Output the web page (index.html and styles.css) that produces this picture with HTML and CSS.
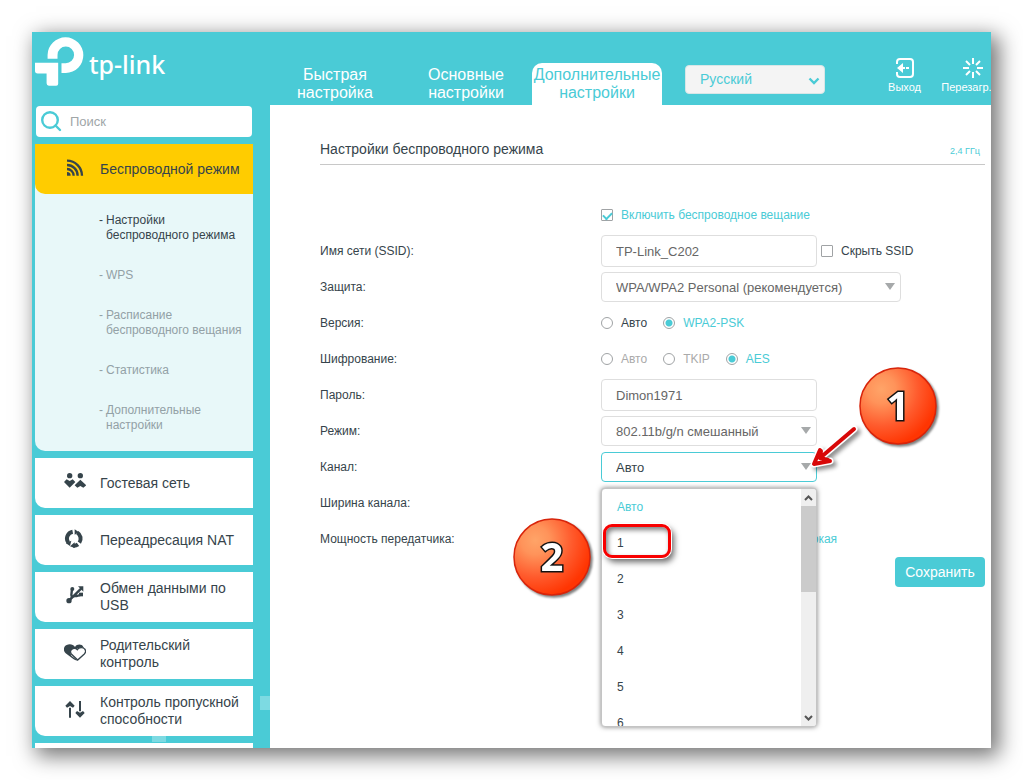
FILE: index.html
```
<!DOCTYPE html>
<html lang="ru">
<head>
<meta charset="utf-8">
<title>Настройки беспроводного режима</title>
<meta name="viewport" content="width=device-width, initial-scale=1">
<link rel="stylesheet" href="styles.css">
</head>
<body>
<div class="app">
  <aside class="sidebar">
    <a class="logo" href="#">
      <svg class="logo-mark" viewBox="45 51 148 148" aria-hidden="true">
        <path d="M83 117V105A54 54 0 1 1 138 160H125V130H138A25 25 0 1 0 113 105V117Z"/>
        <path d="M45 129H115V192Q115 198 109 198H87Q80 198 80 191V161H53Q45 161 45 153Z"/>
      </svg>
      <span class="logo-text">tp-link</span>
    </a>
    <label class="search">
      <svg class="search-icon" viewBox="0 0 21 21" aria-hidden="true"><circle cx="9" cy="9" r="7.800"/><path d="M14.5 14.5L19 19"/></svg>
      <input class="search-input" type="text" placeholder="Поиск" aria-label="Поиск">
    </label>
    <nav class="menu">
      <div class="menu-group">
        <a class="menu-item menu-item-active" href="#">
          <svg class="menu-icon" viewBox="132 410 66 66" aria-hidden="true"><g fill="none" stroke="#36444b" stroke-width="7"><path d="M141 421A45 45 0 0 1 186 466"/><path d="M141 434A32 32 0 0 1 173 466"/><path d="M141 446A20 20 0 0 1 161 466"/></g><path d="M141 455A11 11 0 0 1 152 466H141Z"/></svg>
          <span>Беспроводной режим</span>
        </a>
        <ul class="submenu">
          <li><a class="sub-link sub-link-active" href="#">Настройки беспроводного режима</a></li>
          <li><a class="sub-link" href="#">WPS</a></li>
          <li><a class="sub-link" href="#">Расписание беспроводного вещания</a></li>
          <li><a class="sub-link" href="#">Статистика</a></li>
          <li><a class="sub-link" href="#">Дополнительные настройки</a></li>
        </ul>
      </div>
      <a class="menu-item" href="#">
        <svg class="menu-icon" viewBox="132 62 66 66" aria-hidden="true"><circle cx="149" cy="76" r="8"/><circle cx="181" cy="76" r="8"/><path d="M132 95L140 87L149 92L158 87L166 95L149 112ZM181 88L199 105L190 112L181 107L172 112L164 105Z"/></svg>
        <span>Гостевая сеть</span>
      </a>
      <a class="menu-item" href="#">
        <svg class="menu-icon" viewBox="132 232 66 66" aria-hidden="true"><g fill="none" stroke="#36444b" stroke-width="12"><path d="M158 243A21 21 0 0 0 145 276"/><path d="M172 246A21 21 0 0 1 178 276"/><path d="M174 281A21 21 0 0 1 160 285"/></g><path d="M164 236V252L177 245ZM138 278L154 270L150 286ZM164 275V292L150 287Z"/></svg>
        <span>Переадресация NAT</span>
      </a>
      <a class="menu-item" href="#">
        <svg class="menu-icon" viewBox="132 404 66 66" aria-hidden="true"><circle cx="147" cy="451" r="8"/><path d="M174 408H190V424Z"/><circle cx="157" cy="416" r="6"/><path d="M177 427H189V438H177Z"/><g fill="none" stroke="#36444b" stroke-width="7"><path d="M147 451L184 414M156 416L154 434L156 442M184 433L170 437L162 436M152 443L166 436"/></g></svg>
        <span>Обмен данными по USB</span>
      </a>
      <a class="menu-item" href="#">
        <svg class="menu-icon" viewBox="132 64 66 66" aria-hidden="true"><path d="M165 79C171 69 186 70 190 79L194 86L176 82L150 93L154 105L172 119C169 120 165 119 161 116L137 98C129 91 130 77 140 73C149 69 160 71 165 79Z"/><path d="M172 87C176 79 190 79 194 85C199 91 196 97 193 100L173 118L154 100C149 94 152 86 159 84C166 82 170 85 172 87Z" fill="#fff" stroke="#36444b" stroke-width="4"/></svg>
        <span>Родительский контроль</span>
      </a>
      <a class="menu-item" href="#">
        <svg class="menu-icon" viewBox="132 236 66 66" aria-hidden="true"><path d="M147 262H153V292H147ZM150 242L164 256L159 262L150 257L141 262L136 256ZM177 242H183V273H177ZM180 292L166 278L171 272L180 277L189 272L194 278Z"/></svg>
        <span>Контроль пропускной способности</span>
      </a>
      <a class="menu-item" href="#" aria-label="Безопасность"></a>
    </nav>
  </aside>

  <div class="main">
    <header class="topbar">
      <nav class="tabs">
        <a class="tab" href="#">Быстрая настройка</a>
        <a class="tab" href="#">Основные настройки</a>
        <a class="tab tab-active" href="#">Дополнительные настройки</a>
      </nav>
      <div class="language">
        <select class="language-select" aria-label="Язык"><option>Русский</option></select>
        <svg class="language-arrow" viewBox="0 0 12 8" aria-hidden="true"><path d="M1.5 1.5L6 6L10.5 1.5"/></svg>
      </div>
      <div class="actions">
        <button class="action" type="button">
          <svg class="action-icon" viewBox="0 0 20 20" aria-hidden="true"><path d="M2 6V4Q2 1 5 1H15Q18 1 18 4V16Q18 19 15 19H5Q2 19 2 16V14" fill="none" stroke="#fff" stroke-width="2"/><path d="M2 10L8 5V15ZM7 9H10V11H7ZM11 9H14V11H11Z" fill="#fff"/></svg>
          <span>Выход</span>
        </button>
        <button class="action" type="button">
          <svg class="action-icon" viewBox="0 0 20 20" aria-hidden="true"><path d="M10 0V6M10 14V20M0 10H6M14 10H20M3 3L7 7M13 13L17 17M17 3L13 7M7 13L3 17" fill="none" stroke="#fff" stroke-width="2"/></svg>
          <span>Перезагр.</span>
        </button>
      </div>
    </header>

    <main class="content">
      <div class="heading">
        <h1 class="title">Настройки беспроводного режима</h1>
        <a class="band" href="#">2,4 ГГц</a>
      </div>
      <form class="form">
        <div class="row">
          <span></span>
          <label class="choice choice-on"><input class="check" type="checkbox" checked>Включить беспроводное вещание</label>
        </div>
        <div class="row">
          <label for="ssid">Имя сети (SSID):</label>
          <div class="field-line">
            <input class="text-box" id="ssid" type="text" value="TP-Link_C202">
            <label class="choice"><input class="check" type="checkbox">Скрыть SSID</label>
          </div>
        </div>
        <div class="row">
          <label for="security">Защита:</label>
          <div class="select-box select-wide"><select class="select" id="security"><option>WPA/WPA2 Personal (рекомендуется)</option></select></div>
        </div>
        <div class="row">
          <span>Версия:</span>
          <div class="radios">
            <label class="choice"><input class="radio" type="radio" name="version">Авто</label>
            <label class="choice choice-on"><input class="radio" type="radio" name="version" checked>WPA2-PSK</label>
          </div>
        </div>
        <div class="row">
          <span>Шифрование:</span>
          <div class="radios">
            <label class="choice choice-off"><input class="radio" type="radio" name="cipher" disabled>Авто</label>
            <label class="choice choice-off"><input class="radio" type="radio" name="cipher" disabled>TKIP</label>
            <label class="choice choice-on"><input class="radio" type="radio" name="cipher" checked>AES</label>
          </div>
        </div>
        <div class="row">
          <label for="password">Пароль:</label>
          <input class="text-box" id="password" type="text" value="Dimon1971">
        </div>
        <div class="row">
          <label for="mode">Режим:</label>
          <div class="select-box"><select class="select" id="mode"><option>802.11b/g/n смешанный</option></select></div>
        </div>
        <div class="row">
          <label for="channel">Канал:</label>
          <div class="select-box select-open">
            <select class="select" id="channel"><option>Авто</option></select>
            <div class="dropdown">
              <ul class="options" role="listbox" aria-label="Канал">
                <li class="option option-selected" role="option" aria-selected="true">Авто</li>
                <li class="option" role="option">1</li>
                <li class="option" role="option">2</li>
                <li class="option" role="option">3</li>
                <li class="option" role="option">4</li>
                <li class="option" role="option">5</li>
                <li class="option" role="option">6</li>
              </ul>
              <div class="scrollbar" aria-hidden="true">
                <svg class="scroll-arrow" viewBox="0 0 15 17"><path d="M4 11L7.5 7.5L11 11"/></svg>
                <div class="scroll-thumb"></div>
                <svg class="scroll-arrow" viewBox="0 0 15 17"><path d="M4 7L7.5 10.5L11 7"/></svg>
              </div>
            </div>
            <div class="highlight"></div>
            <svg class="pointer" viewBox="0 0 60 54" aria-hidden="true">
              <path class="pointer-edge" d="M48 9L14 38M14 30L8 44L24 41"/>
              <path class="pointer-line" d="M48 9L14 38M14 30L8 44L24 41M15 31L14 38L22 40"/>
            </svg>
            <svg class="badge badge-one" viewBox="0 0 84 84" role="img" aria-label="1">
              <defs><radialGradient id="ball" cx="0.28" cy="0.28" r="0.75"><stop offset="0" stop-color="#ffa468"/><stop offset="0.25" stop-color="#ff935a"/><stop offset="0.65" stop-color="#ff5a2c"/><stop offset="1" stop-color="#ff3502"/></radialGradient></defs>
              <circle class="badge-ball" cx="41" cy="41" r="38"/><text class="badge-text" x="41" y="55">1</text>
            </svg>
            <svg class="badge badge-two" viewBox="0 0 84 84" role="img" aria-label="2">
              <circle class="badge-ball" cx="41" cy="41" r="38"/><text class="badge-text" x="41" y="55">2</text>
            </svg>
          </div>
        </div>
        <div class="row">
          <label for="width">Ширина канала:</label>
          <div class="select-box"><select class="select" id="width"><option>Авто</option></select></div>
        </div>
        <div class="row">
          <span>Мощность передатчика:</span>
          <div class="radios radios-power">
            <label class="choice"><input class="radio" type="radio" name="power">Низкая</label>
            <label class="choice"><input class="radio" type="radio" name="power">Средняя</label>
            <label class="choice choice-on"><input class="radio" type="radio" name="power" checked>Высокая</label>
          </div>
        </div>
        <button class="save" type="button">Сохранить</button>
      </form>
    </main>
  </div>
</div>
</body>
</html>
```
FILE: styles.css
```
:root {
  --teal: #4acbd6;
  --dark: #36444b;
}
* { box-sizing: border-box; }
body {
  margin: 0;
  padding: 32px;
  height: 100vh;
  background: #fff;
  color: var(--dark);
  font: 12px/15px "Liberation Sans", Arial, sans-serif;
}
a { color: inherit; text-decoration: none; }
ul { list-style: none; margin: 0; padding: 0; }
input, select, button { font: inherit; color: inherit; margin: 0; }

.app {
  display: grid;
  grid-template-columns: 238px 1fr;
  height: 100%;
  overflow: hidden;
  background: #fff;
  box-shadow: 6px 6px 20px 2px rgba(0, 0, 0, 0.55);
}

/* Sidebar */
.sidebar {
  display: flex;
  flex-direction: column;
  min-height: 0;
  overflow: hidden;
  padding: 0 17px 0 3px;
  background-color: var(--teal);
  background-image:
    linear-gradient(#7ddae2, #7ddae2),
    linear-gradient(#7ddae2, #7ddae2);
  background-repeat: no-repeat;
  background-size: 10px 14px, 14px 6px;
  background-position: right 0 bottom 38px, left 120px bottom 6px;
}
.logo {
  display: flex;
  flex: none;
  align-items: flex-start;
  gap: 5px;
  height: 74px;
  padding-top: 5px;
  color: #fff;
}
.logo-mark { width: 49px; height: 49px; fill: #fff; }
.logo-text { font: 500 25px/32px "Noto Sans", sans-serif; padding-top: 11px; }
.search {
  display: flex;
  flex: none;
  align-items: center;
  gap: 8px;
  height: 31px;
  margin: 0 1px 7px;
  padding: 0 5px;
  border-radius: 4px;
  background: #fff;
}
.search-icon { flex: none; width: 21px; height: 21px; fill: none; stroke: var(--teal); stroke-width: 2.400; stroke-linecap: round; }
.search-input { flex: 1; min-width: 0; padding: 0; border: 0; outline: 0; background: none; font-size: 13px; }
.search-input::placeholder { color: #a0a6a8; opacity: 1; }
.menu { display: flex; flex-direction: column; gap: 7px; }
.menu-group { background: #e8f8f9; border-bottom-left-radius: 10px; }
.menu-item {
  display: flex;
  flex: none;
  align-items: center;
  gap: 14px;
  height: 50px;
  padding: 0 4px 0 29px;
  border-bottom-left-radius: 10px;
  background: #fff;
  font-size: 14px;
  line-height: 17px;
}
.menu-item-active { background: #fc0; }
.menu-icon { flex: none; width: 22px; height: 22px; margin-bottom: 3px; fill: var(--dark); }
.submenu { display: grid; gap: 25px; padding: 19px 4px 18px 64px; }
.sub-link { display: flex; color: #93a1a6; }
.sub-link::before { content: "-"; flex: none; width: 7px; }
.sub-link-active { color: var(--dark); }

/* Header */
.main { display: flex; flex-direction: column; min-width: 0; }
.topbar { display: flex; flex: none; align-items: flex-end; height: 73px; background: var(--teal); color: #fff; }
.tabs { display: flex; flex: none; gap: 1px; }
.tab {
  display: flex;
  align-items: center;
  justify-content: center;
  width: 130px;
  height: 42px;
  padding: 0 24px;
  border-radius: 10px 10px 0 0;
  font-size: 16px;
  line-height: 18px;
  text-align: center;
}
.tab-active { padding: 0; background: #fff; color: var(--teal); }
.language { position: relative; width: 140px; margin: 0 auto 11px 23px; color: var(--teal); }
.language-select {
  width: 100%;
  height: 29px;
  padding: 0 14px;
  border: 1px solid #d8e6e7;
  border-radius: 4px;
  background: #f4f4f4;
  font-size: 14px;
  appearance: none;
}
.language-arrow { position: absolute; right: 5px; top: 12px; width: 12px; height: 8px; fill: none; stroke: var(--teal); stroke-width: 2.400; pointer-events: none; }
.actions { display: flex; gap: 21px; margin-bottom: 11px; }
.action {
  display: flex;
  flex-direction: column;
  align-items: center;
  gap: 3px;
  padding: 0;
  border: 0;
  background: none;
  font-size: 11px;
  line-height: 13px;
}
.action:last-child { width: 49px; }
.action:last-child .action-icon { align-self: flex-end; }
.action-icon { width: 20px; height: 20px; margin-right: 8px; }
.action:first-child .action-icon { margin-right: 0; }

/* Content */
.content { flex: 1; padding: 34px 6px 0 50px; }
.heading { display: flex; align-items: center; justify-content: space-between; height: 26px; padding-bottom: 6px; border-bottom: 1px solid #c8c8c8; }
.title { margin: 0; font-size: 14px; line-height: 20px; font-weight: 400; }
.band { padding: 4px 5px 0 0; font-size: 9px; line-height: 12px; color: var(--teal); }
.form { display: flex; flex-direction: column; padding-top: 32px; }
.row { display: grid; grid-template-columns: 281px 1fr; align-items: center; height: 36px; }
.field-line { display: flex; align-items: center; gap: 4px; }
.text-box, .select {
  height: 30px;
  padding: 0 14px;
  border: 1px solid #dedede;
  border-radius: 4px;
  background: #fff;
  color: #666;
  font-size: 13px;
}
.text-box { width: 216px; height: 32px; }
.select { width: 100%; appearance: none; }
.select-box { position: relative; width: 216px; }
.select-wide { width: 300px; }
.select-box::after {
  content: "";
  position: absolute;
  right: 6px;
  top: 11px;
  border: 5px solid transparent;
  border-top: 7px solid #a6a9aa;
  border-bottom: 0;
  pointer-events: none;
}
.select-open { z-index: 2; }
.select-open .select { border-color: var(--teal); color: var(--dark); }
.radios { display: flex; gap: 16px; }
.radios-power { gap: 20px; }
.choice { display: flex; align-items: center; gap: 8px; white-space: nowrap; }
.choice-on { color: var(--teal); }
.choice-off { color: #aaa; }
.check, .radio { appearance: none; flex: none; width: 12px; height: 12px; border: 1px solid #a0a3a5; background: #fff; }
.check { border-radius: 1px; }
.radio { border-radius: 50%; }
.check:checked { display: grid; place-items: center; }
.check:checked::after { content: ""; width: 7px; height: 4px; border: solid var(--teal); border-width: 0 0 2px 2px; transform: rotate(-45deg); }
.radio:checked { background: radial-gradient(circle, var(--teal) 3px, #fff 4px); }
.save { align-self: flex-end; width: 90px; height: 30px; border: 0; border-radius: 4px; background: var(--teal); color: #fff; font-size: 14px; }

/* Channel list */
.dropdown {
  position: absolute;
  left: 0;
  top: 36px;
  display: flex;
  width: 216px;
  height: 239px;
  border: 1px solid #c4c4c4;
  border-radius: 4px;
  background: #fff;
  box-shadow: 0 0 5px rgba(0, 0, 0, 0.5);
  overflow: hidden;
}
.options { flex: 1; overflow: hidden; }
.option { height: 36px; padding-left: 15px; line-height: 36px; }
.option-selected { color: var(--teal); }
.scrollbar { display: flex; flex-direction: column; width: 15px; background: #efefef; }
.scroll-arrow { flex: none; width: 15px; height: 17px; fill: none; stroke: #555; stroke-width: 2; }
.scroll-thumb { height: 86px; margin-bottom: auto; background: #cbcbcb; }

/* Step markers */
.highlight {
  position: absolute;
  left: 2px;
  top: 72px;
  width: 68px;
  height: 34px;
  border: 3px solid #f80000;
  border-radius: 9px;
  box-shadow: 0 0 0 1px #fff, 3px 4px 6px rgba(0, 0, 0, 0.6), inset 2px 3px 5px rgba(0, 0, 0, 0.5);
}
.pointer {
  position: absolute;
  left: 205px;
  top: -32px;
  width: 60px;
  height: 54px;
  fill: none;
  stroke-linecap: round;
  stroke-linejoin: round;
  filter: drop-shadow(3px 3px 2px rgba(0, 0, 0, 0.45));
}
.pointer-edge { stroke: #fff; stroke-width: 7; }
.pointer-line { stroke: #d80808; stroke-width: 4; }
.badge { position: absolute; width: 84px; height: 84px; filter: drop-shadow(2px 2px 1px rgba(0, 0, 0, 0.5)); }
.badge-one { left: 256px; top: -87px; }
.badge-two { left: -90px; top: 64px; }
.badge-ball { fill: url(#ball); stroke: #d8240a; stroke-width: 1.500; }
.badge-text { font: 700 40px "Open Sans", sans-serif; text-anchor: middle; fill: #fff; stroke: #111; stroke-width: 3; paint-order: stroke; }
```
